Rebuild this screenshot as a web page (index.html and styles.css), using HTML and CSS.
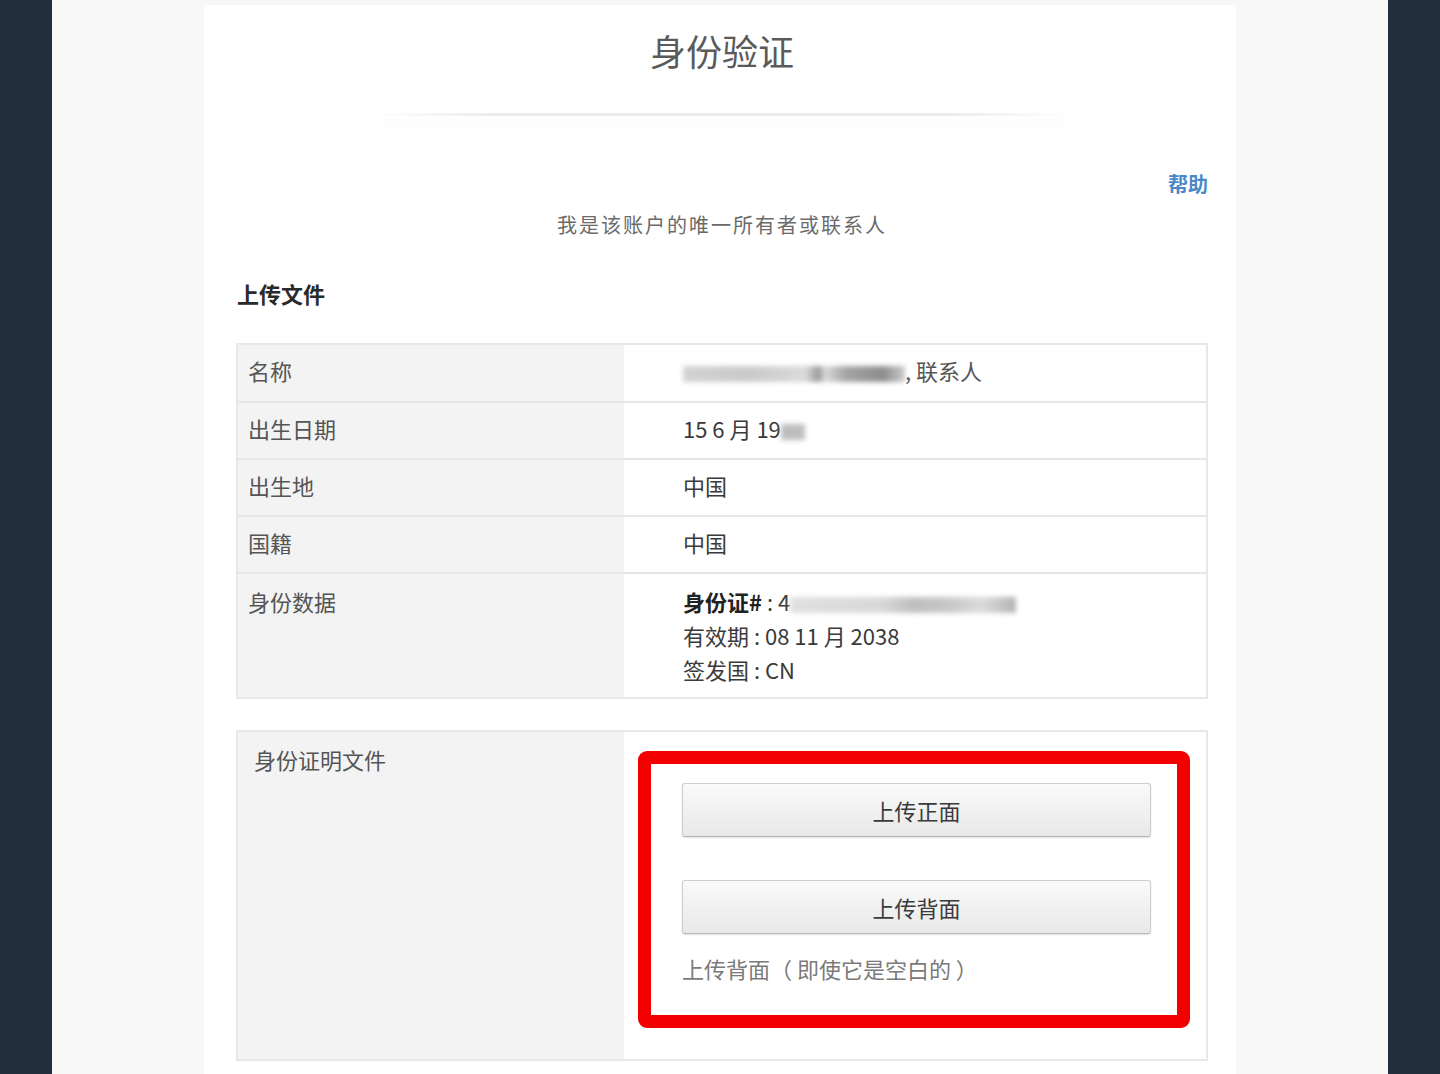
FILE: index.html
```html
<!DOCTYPE html>
<html>
<head>
  <meta charset="UTF-8">
  <title>身份验证</title>
  <meta name="viewport" content="width=device-width, initial-scale=1">
  <link rel="stylesheet" href="styles.css">
</head>
<body>

  <div class="stage">
    <div class="panel">
      <h1 class="title">身份验证</h1>
      <div class="divider"></div>

      <div class="help-row"><a class="help" href="#">帮助</a></div>
      <p class="owner">我是该账户的唯一所有者或联系人</p>

      <h2 class="section">上传文件</h2>

      <div class="info">
        <div class="row">
          <div class="label">名称</div>
          <div class="value"><span class="blur blur-name"></span><span class="after-blur">, 联系人</span></div>
        </div>
        <div class="row">
          <div class="label">出生日期</div>
          <div class="value">15 6 月 19<span class="blur blur-year"></span></div>
        </div>
        <div class="row">
          <div class="label">出生地</div>
          <div class="value">中国</div>
        </div>
        <div class="row">
          <div class="label">国籍</div>
          <div class="value">中国</div>
        </div>
        <div class="row row-tall">
          <div class="label">身份数据</div>
          <div class="value">
            <div><b>身份证#</b> : 4<span class="blur blur-id"></span></div>
            <div>有效期 : 08 11 月 2038</div>
            <div>签发国 : CN</div>
          </div>
        </div>
      </div>

      <div class="info docs">
        <div class="row row-docs">
          <div class="label">身份证明文件</div>
          <div class="value">
            <div class="mark">
              <button class="upload">上传正面</button>
              <button class="upload">上传背面</button>
              <p class="note">上传背面（ 即使它是空白的 ）</p>
            </div>
          </div>
        </div>
      </div>
    </div>
  </div>

</body>
</html>
```

FILE: styles.css
```css
body {
  margin: 0;
  background: #232e3c;
  font-family: "Noto Sans CJK SC", "Noto Sans", sans-serif;
}
.stage {
  margin: 0 52px;
  height: 1074px;
  background: #f8f8f8;
  overflow: hidden;
}
.panel {
  width: 1032px;
  margin: 0 auto;
  height: 1074px;
  background: #fff;
  padding: 0 28px 0 32px;
  box-sizing: border-box;
  border-top: 5px solid #f7f7f7;
}
.title {
  margin: 0;
  padding-top: 23px;
  font-size: 36px;
  line-height: 44px;
  font-weight: 400;
  color: #5a5a5a;
  text-align: center;
}
.divider {
  margin: 41px auto 0;
  width: 700px;
  height: 3px;
  background: linear-gradient(to right, rgba(230,230,230,0), #e9e9e9 20%, #e9e9e9 80%, rgba(230,230,230,0));
  box-shadow: 0 6px 12px rgba(0,0,0,0.04);
}
.help-row {
  margin-top: 56px;
  text-align: right;
  line-height: 24px;
}
.help {
  font-size: 20px;
  font-weight: 700;
  color: #4a88c8;
  text-decoration: none;
}
.owner {
  margin: 15px 0 0;
  font-size: 20px;
  letter-spacing: 2px;
  line-height: 26px;
  color: #6a6a6a;
  text-align: center;
}
.section {
  margin: 41px 0 0 1px;
  font-size: 22px;
  line-height: 28px;
  font-weight: 700;
  color: #2a2a2a;
}
.info {
  margin-top: 36px;
  border: 2px solid #e8e8e8;
  background: linear-gradient(to right, #f3f3f3 386px, #fff 386px);
}
.row {
  display: grid;
  grid-template-columns: 386px 1fr;
  height: 55px;
  border-bottom: 2px solid #e6e6e6;
}
.row:first-child {
  height: 56px;
}
.row:last-child {
  border-bottom: none;
}
.label {
  padding-left: 10px;
  font-size: 22px;
  line-height: 51px;
  color: #555;
}
.value {
  padding-left: 59px;
  font-size: 22px;
  line-height: 51px;
  color: #3a3a3a;
}
.info .row-tall {
  height: 123px;
}
.row-tall .label,
.row-tall .value {
  line-height: 34px;
  padding-top: 10px;
}
.row-tall b {
  font-weight: 700;
  color: #222;
}
.blur {
  display: inline-block;
  vertical-align: middle;
  height: 16px;
  filter: blur(2.5px);
  opacity: 0.75;
}
.blur-name {
  width: 222px;
  background: linear-gradient(to right, #c4c4c4 0, #b8b8b8 30%, #cfcfcf 55%, #777 61%, #cfcfcf 64%, #888 73%, #666 90%, #bbb 100%);
}
.after-blur {
  color: #555;
}
.blur-year {
  width: 24px;
  background: #a8a8a8;
}
.blur-id {
  width: 226px;
  background: linear-gradient(to right, #d6d6d6 0, #ccc 40%, #aaa 55%, #b5b5b5 70%, #d0d0d0 85%, #9a9a9a 100%);
}
.docs {
  margin-top: 31px;
}
.docs .row-docs {
  height: 327px;
}
.row-docs .label {
  padding: 12px 0 0 16px;
  line-height: 30px;
}
.row-docs .value {
  padding: 19px 16px 0 14px;
  line-height: normal;
}
.mark {
  height: 277px;
  box-sizing: border-box;
  border: 13px solid #f20000;
  border-radius: 9px;
  background: #fff;
  padding: 19px 26px 0 31px;
}
.upload {
  display: block;
  width: 100%;
  height: 54px;
  font-family: inherit;
  font-size: 22px;
  color: #3a3a3a;
  background: linear-gradient(to bottom, #fafafa, #e8e8e8);
  border: 1px solid #cdcdcd;
  border-bottom-color: #b5b5b5;
  border-radius: 3px;
  box-shadow: 0 1px 2px rgba(0,0,0,0.12);
  cursor: pointer;
}
.upload + .upload {
  margin-top: 43px;
}
.note {
  margin: 20px 0 0;
  font-size: 22px;
  line-height: 28px;
  color: #7a7a7a;
}
```
